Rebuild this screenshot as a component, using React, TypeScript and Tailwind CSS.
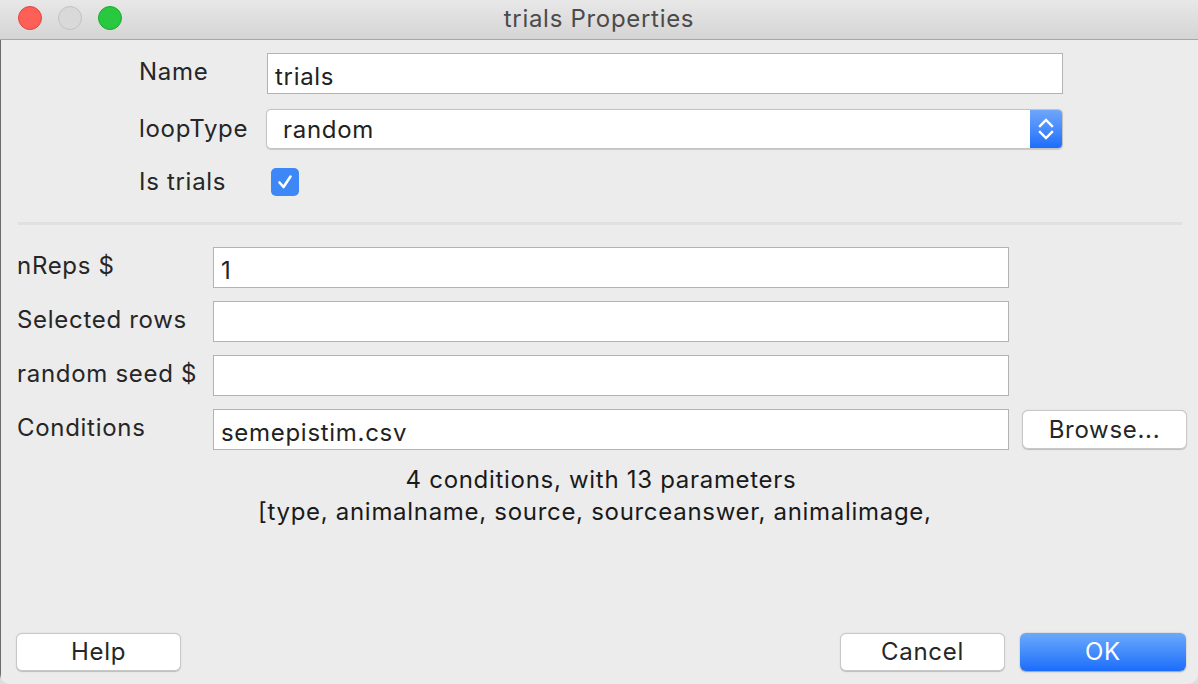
import React from 'react';

const font = { fontFamily: 'Inter, "Liberation Sans", sans-serif' };

function TextField({ value, className }: { value?: string; className: string }) {
  return (
    <div
      className={`h-[41px] bg-white border border-[#b3b3b3] flex items-center pl-[7px] pt-[7px] text-[24px] tracking-[0.7px] text-[#222] ${className}`}
    >
      {value}
    </div>
  );
}

function MacButton({ label, primary, className }: { label: string; primary?: boolean; className: string }) {
  return (
    <button
      className={`h-[38px] rounded-[6px] text-[24px] tracking-[0.7px] flex items-center justify-center ${
        primary
          ? 'bg-gradient-to-b from-[#6aa9fb] to-[#1a6cfb] text-white shadow-[0_0.5px_1.5px_rgba(0,0,0,0.35)]'
          : 'bg-white text-[#262626] border border-[#c8c8c8] shadow-[0_0.5px_1px_rgba(0,0,0,0.2)]'
      } ${className}`}
    >
      {label}
    </button>
  );
}

export default function App() {
  return (
    <div className="w-[1198px] h-[684px] bg-[#dedede] overflow-hidden tracking-[0.7px]" style={font}>
      <div className="w-full h-full flex flex-col bg-[#ececec] rounded-bl-[10px] rounded-br-[10px] overflow-hidden">
        {/* Title bar */}
        <div className="h-[40px] shrink-0 relative flex items-center justify-center bg-gradient-to-b from-[#e8e8e8] to-[#d4d4d4] border-b border-[#a8a8a8]">
          <div className="absolute left-[18px] top-[6px] flex gap-[16px]">
            <span className="w-[24px] h-[24px] rounded-full bg-[#fe5f57] border border-[#e1463f]" />
            <span className="w-[24px] h-[24px] rounded-full bg-[#d9d9d9] border border-[#c2c2c2]" />
            <span className="w-[24px] h-[24px] rounded-full bg-[#28c840] border border-[#1aab29]" />
          </div>
          <span className="text-[24px] text-[#4b4b4b] pb-[2px]">trials Properties</span>
        </div>

        <div className="flex-1 flex flex-col border-l border-[#6b6b6b] text-[24px]">
          {/* Top section */}
          <div className="flex flex-col pl-[138px] pt-[13px]">
            <div className="flex items-center h-[41px]">
              <span className="w-[128px] text-[#262626] pb-[4px]">Name</span>
              <TextField value="trials" className="w-[796px]" />
            </div>
            <div className="flex items-center h-[40px] mt-[15px]">
              <span className="w-[127px] text-[#262626]">loopType</span>
              <div className="w-[797px] h-[40px] flex rounded-[5px] bg-white border border-[#c4c4c4] shadow-[0_0.5px_1px_rgba(0,0,0,0.15)] overflow-hidden">
                <div className="flex-1 flex items-center pl-[16px] pt-[2px] text-[#222]">random</div>
                <div className="w-[32px] bg-gradient-to-b from-[#6ea6fa] to-[#1b6dfb] flex items-center justify-center">
                  <svg width="16" height="26" viewBox="0 0 16 26" fill="none" stroke="white" strokeWidth="2.4" strokeLinecap="square">
                    <path d="M2 10 L8 4 L14 10" />
                    <path d="M2 16 L8 22 L14 16" />
                  </svg>
                </div>
              </div>
            </div>
            <div className="flex items-center h-[40px] mt-[13px]">
              <span className="w-[132px] text-[#262626]">Is trials</span>
              <span className="w-[28px] h-[28px] rounded-[5px] bg-[#3d88f6] flex items-center justify-center">
                <svg width="18" height="18" viewBox="0 0 18 18" fill="none" stroke="white" strokeWidth="2.6" strokeLinecap="round" strokeLinejoin="round">
                  <path d="M3.5 9.5 L7.5 14 L14.5 3.5" />
                </svg>
              </span>
            </div>
          </div>

          {/* Separator */}
          <div className="h-[3px] bg-[#e0e0e0] ml-[17px] mr-[16px] mt-[20px]" />

          {/* Loop parameters */}
          <div className="flex flex-col gap-[13px] pl-[16px] pt-[22px]">
            <div className="flex items-center">
              <span className="w-[196px] text-[#262626] pb-[4px]">nReps $</span>
              <TextField value="1" className="w-[796px]" />
            </div>
            <div className="flex items-center">
              <span className="w-[196px] text-[#262626] pb-[4px]">Selected rows</span>
              <TextField className="w-[796px]" />
            </div>
            <div className="flex items-center">
              <span className="w-[196px] text-[#262626] pb-[4px]">random seed $</span>
              <TextField className="w-[796px]" />
            </div>
            <div className="flex items-center">
              <span className="w-[196px] text-[#262626] pb-[4px]">Conditions</span>
              <TextField value="semepistim.csv" className="w-[796px]" />
              <MacButton label="Browse..." className="w-[165px] h-[39px] ml-[13px]" />
            </div>
          </div>

          {/* Conditions info */}
          <div className="ml-[257px] w-[686px] mt-[14px] leading-[32px] text-[#1a1a1a] whitespace-nowrap">
            <div className="text-center">4 conditions, with 13 parameters</div>
            <div>[type, animalname, source, sourceanswer, animalimage,</div>
          </div>

          <div className="flex-1" />

          {/* Buttons */}
          <div className="flex items-center pl-[15px] pb-[13px]">
            <MacButton label="Help" className="w-[165px]" />
            <div className="flex-1" />
            <MacButton label="Cancel" className="w-[165px]" />
            <MacButton label="OK" primary className="w-[166px] ml-[15px] mr-[12px]" />
          </div>
        </div>
      </div>
    </div>
  );
}
